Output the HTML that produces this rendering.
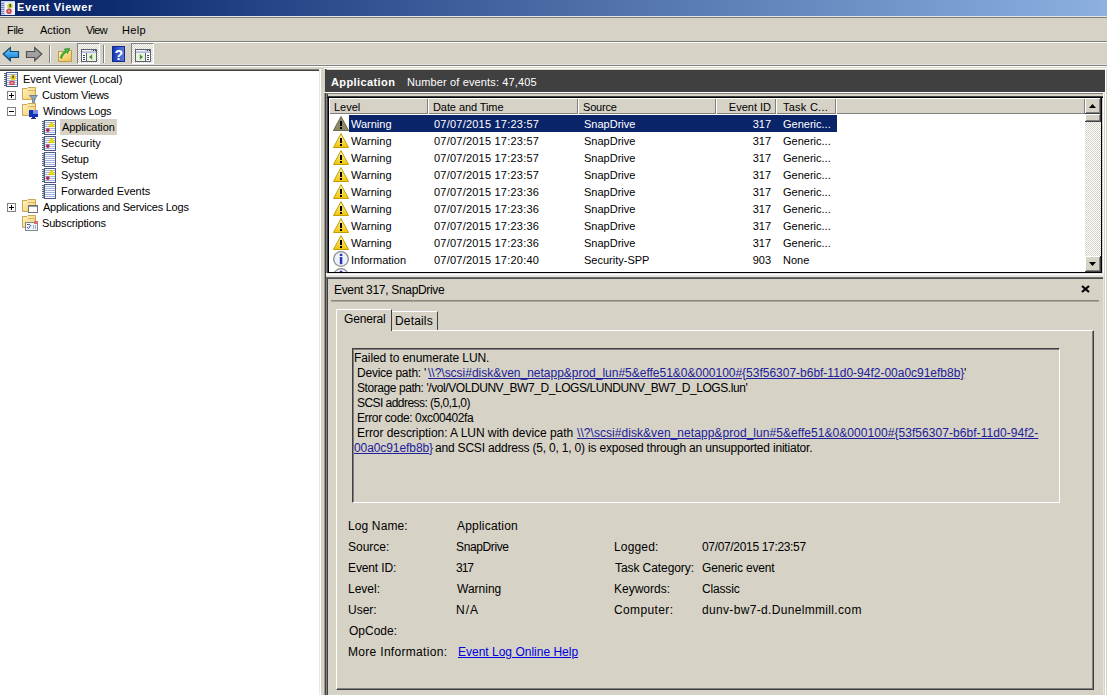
<!DOCTYPE html>
<html><head><meta charset="utf-8"><style>
*{margin:0;padding:0;box-sizing:border-box}
html,body{width:1107px;height:695px;overflow:hidden;background:#d6d2c6;font-family:"Liberation Sans",sans-serif;font-size:11px;color:#000;position:relative}
div,svg{position:absolute}
.t{white-space:nowrap;line-height:13px}
.s{font-size:12px;line-height:15px}
.lnk{color:#20209a;text-decoration:underline}
.dz{background-color:#fff;background-image:linear-gradient(45deg,#d6d2c6 25%,transparent 25%,transparent 75%,#d6d2c6 75%),linear-gradient(45deg,#d6d2c6 25%,transparent 25%,transparent 75%,#d6d2c6 75%);background-size:2px 2px;background-position:0 0,1px 1px}
</style></head><body>
<svg width="0" height="0" style="position:absolute"><defs>
<linearGradient id="gw" x1="0" y1="0" x2="0" y2="1"><stop offset="0" stop-color="#fff8b0"/><stop offset="1" stop-color="#f4c400"/></linearGradient>
<linearGradient id="gf" x1="0" y1="0" x2="1" y2="1"><stop offset="0" stop-color="#fff4c0"/><stop offset="1" stop-color="#f4cc68"/></linearGradient>
<symbol id="warn" viewBox="0 0 16 15"><path d="M8 0.6 L15.5 14.5 L0.5 14.5 Z" fill="url(#gw)" stroke="#c0a000" stroke-width="1" stroke-linejoin="round"/><rect x="7" y="5" width="2" height="5" fill="#000" shape-rendering="crispEdges"/><rect x="7" y="11" width="2" height="2" fill="#000" shape-rendering="crispEdges"/></symbol>
<symbol id="warns" viewBox="0 0 16 15"><path d="M8 0.5 L15.6 14.5 L0.4 14.5 Z" fill="#8a8a64" stroke="#6a6a50" stroke-width="1" stroke-linejoin="round"/><rect x="7" y="5" width="2" height="5" fill="#000" shape-rendering="crispEdges"/><rect x="7" y="11" width="2" height="2" fill="#000" shape-rendering="crispEdges"/></symbol>
<symbol id="info" viewBox="0 0 16 16"><circle cx="8" cy="8" r="7.3" fill="#f0f2f8" stroke="#8c8c8c" stroke-width="1.3"/><rect x="6.8" y="6" width="2.5" height="7.2" fill="#2434c0"/><rect x="6.8" y="2.8" width="2.5" height="2.2" fill="#2434c0"/></symbol>
<symbol id="folder" viewBox="0 0 14 13"><path d="M0.5 1.5 H5 L6 0.5 H13.5 V12.5 H0.5 Z" fill="url(#gf)" stroke="#c8a858" stroke-width="1"/><path d="M6 3.5 H13" stroke="#d8b868" stroke-width="1"/></symbol>
<symbol id="log" viewBox="0 0 14 15"><rect x="2.5" y="0.5" width="11" height="14" fill="#fff" stroke="#4c5888" stroke-width="1"/><path d="M3 2.5 H13 M3 4.5 H13 M3 6.5 H13 M3 8.5 H13 M3 10.5 H13 M3 12.5 H13" stroke="#a0b4dc" stroke-width="1"/><path d="M0 1.5 H2 M0 3.5 H2 M0 5.5 H2 M0 7.5 H2 M0 9.5 H2 M0 11.5 H2 M0 13.5 H2" stroke="#5c6474" stroke-width="1"/><path d="M1 2.5 H2 M1 4.5 H2 M1 6.5 H2 M1 8.5 H2 M1 10.5 H2 M1 12.5 H2" stroke="#b8bcc8" stroke-width="1"/></symbol>
<symbol id="logw" viewBox="0 0 14 15"><use href="#log"/><path d="M9.5 2 L12.3 6.6 L6.7 6.6 Z" fill="#f4e000" stroke="#e8c800" stroke-width="0.9" stroke-linejoin="round"/><circle cx="5.8" cy="10.1" r="1.9" fill="#b82848"/></symbol>
<symbol id="plus" viewBox="0 0 9 9"><rect x="0.5" y="0.5" width="8" height="8" fill="#fff" stroke="#808080"/><path d="M2 4.5 H7 M4.5 2 V7" stroke="#000"/></symbol>
<symbol id="minus" viewBox="0 0 9 9"><rect x="0.5" y="0.5" width="8" height="8" fill="#fff" stroke="#808080"/><path d="M2 4.5 H7" stroke="#000"/></symbol>
<symbol id="win" viewBox="0 0 16 13"><rect x="0.5" y="0.5" width="15" height="12" fill="#e8ecf8" stroke="#686c7c"/><rect x="1" y="1" width="14" height="2" fill="#b0b8d0"/><path d="M1 3.5 H15" stroke="#686c7c"/></symbol>
</defs></svg>
<div style="left:0px;top:0px;width:1107px;height:16px;background:linear-gradient(to right,#0a246a 0px,#0e2b70 110px,#224284 250px,#4a6aa6 550px,#6c90c4 850px,#8cafe0 1100px,#8eb1e2 1107px);"></div>
<svg style="left:1px;top:1px" width="14" height="14" viewBox="0 0 14 14"><rect x="0" y="0" width="14" height="14" fill="#c8cce8"/><rect x="4" y="1" width="10" height="13" fill="#e8ecfc"/><path d="M0 2.5 H3 M0 4.5 H3 M0 6.5 H3 M0 8.5 H3 M0 10.5 H3 M0 12.5 H3" stroke="#7c84b0"/><path d="M4 3.5 H14 M4 5.5 H14 M4 7.5 H14 M4 9.5 H14 M4 11.5 H14" stroke="#f8f8ff"/><circle cx="9" cy="5" r="2.8" fill="#d0d840"/><rect x="8.5" y="3" width="1.3" height="3.2" fill="#303000"/><circle cx="8" cy="10.3" r="2.8" fill="#c85058"/><circle cx="8" cy="10.3" r="1" fill="#f0a0a0"/></svg>
<div class="t" style="left:17px;top:1px;letter-spacing:0.636px;color:#fff;font-weight:bold">Event Viewer</div>
<div style="left:0px;top:16px;width:1107px;height:1px;background:#e8e6e0;"></div>
<div style="left:0px;top:17px;width:1107px;height:1px;background:#808080;"></div>
<div class="t" style="left:7px;top:24px;letter-spacing:-0.333px;">File</div>
<div class="t" style="left:40px;top:24px;letter-spacing:0.0px;">Action</div>
<div class="t" style="left:86px;top:24px;letter-spacing:-0.667px;">View</div>
<div class="t" style="left:122px;top:24px;letter-spacing:0.333px;">Help</div>
<div style="left:0px;top:41px;width:1107px;height:1px;background:#808080;"></div>
<div style="left:0px;top:42px;width:1107px;height:1px;background:#fff;"></div>
<svg style="left:2px;top:46px" width="18" height="16" viewBox="0 0 18 16"><defs><linearGradient id="gb" x1="0" y1="0" x2="0" y2="1"><stop offset="0" stop-color="#70d0ff"/><stop offset="1" stop-color="#1078d8"/></linearGradient></defs><path d="M1.2 8 L8.3 1.5 L8.3 5.5 L16.5 5.5 L16.5 11.5 L8.3 11.5 L8.3 14.7 Z" fill="url(#gb)" stroke="#184868" stroke-width="1.2" stroke-linejoin="miter"/></svg>
<svg style="left:25px;top:46px" width="18" height="16" viewBox="0 0 18 16"><path d="M16.8 8 L9.7 1.5 L9.7 5.5 L1.5 5.5 L1.5 11.5 L9.7 11.5 L9.7 14.7 Z" fill="#a0a0a0" stroke="#505050" stroke-width="1.2"/></svg>
<div style="left:49px;top:45px;width:1px;height:18px;background:#808080;"></div>
<div style="left:50px;top:45px;width:1px;height:18px;background:#fff;"></div>
<svg style="left:57px;top:47px" width="16" height="16" viewBox="0 0 16 16"><defs><linearGradient id="gfu" x1="0" y1="0" x2="0.6" y2="1"><stop offset="0" stop-color="#fff4b8"/><stop offset="1" stop-color="#f0c460"/></linearGradient></defs><path d="M1.5 4.5 H9 L10 3.5 H14.5 V14.5 H1.5 Z" fill="url(#gfu)" stroke="#c09848"/><path d="M3.5 11 C4 7 6 5 8.5 4 L7.5 2 L12.5 1.5 L10.5 6.5 L9.8 5 C7.5 6 5.5 8.5 4.5 11.5 Z" fill="#40c040" stroke="#208020" stroke-width="0.7"/></svg>
<div class="dz" style="left:77px;top:43px;width:23px;height:21px;border-left:1px solid #808080;border-top:1px solid #808080;border-right:1px solid #fff;border-bottom:1px solid #fff"></div>
<div class="dz" style="left:131px;top:43px;width:23px;height:21px;border-left:1px solid #808080;border-top:1px solid #808080;border-right:1px solid #fff;border-bottom:1px solid #fff"></div>
<svg style="left:81px;top:49px" width="16" height="13" viewBox="0 0 16 13"><g shape-rendering="crispEdges"><rect x="0" y="0" width="16" height="13" fill="#5c6070"/><rect x="1" y="1" width="14" height="2" fill="#c8ccd8"/><rect x="1" y="1" width="9" height="1" fill="#f4f4f8"/><rect x="12" y="1" width="1" height="1" fill="#404450"/><rect x="14" y="1" width="1" height="1" fill="#404450"/><rect x="1" y="3" width="14" height="1" fill="#b4bce8"/><rect x="1" y="4" width="4" height="8" fill="#fff"/><rect x="5" y="4" width="1" height="8" fill="#5c6070"/><rect x="6" y="4" width="9" height="8" fill="#e8f4dc"/><rect x="2" y="6" width="2" height="1" fill="#3c4468"/><rect x="2" y="8" width="2" height="1" fill="#3c4468"/><rect x="2" y="10" width="2" height="1" fill="#3c4468"/></g><path d="M8 8 L11.2 5.2 L11.2 10.8 Z" fill="#4c8c3c"/></svg>
<div style="left:103px;top:45px;width:1px;height:18px;background:#808080;"></div>
<div style="left:104px;top:45px;width:1px;height:18px;background:#fff;"></div>
<svg style="left:112px;top:46px" width="13" height="16" viewBox="0 0 13 16"><defs><linearGradient id="gh" x1="0" y1="0" x2="1" y2="0"><stop offset="0" stop-color="#1030a8"/><stop offset="0.3" stop-color="#2848c0"/><stop offset="1" stop-color="#6080e0"/></linearGradient></defs><rect x="0" y="0" width="13" height="16" fill="url(#gh)"/><rect x="0.5" y="0.5" width="12" height="15" fill="none" stroke="#102890"/><text x="6.8" y="13.5" font-family="Liberation Sans" font-weight="bold" font-size="14" fill="#fff" text-anchor="middle">?</text></svg>
<svg style="left:135px;top:49px" width="16" height="13" viewBox="0 0 16 13"><g shape-rendering="crispEdges"><rect x="0" y="0" width="16" height="13" fill="#5c6070"/><rect x="1" y="1" width="14" height="2" fill="#c8ccd8"/><rect x="1" y="1" width="9" height="1" fill="#f4f4f8"/><rect x="12" y="1" width="1" height="1" fill="#404450"/><rect x="14" y="1" width="1" height="1" fill="#404450"/><rect x="1" y="3" width="14" height="1" fill="#b4bce8"/><rect x="11" y="4" width="4" height="8" fill="#fff"/><rect x="10" y="4" width="1" height="8" fill="#5c6070"/><rect x="1" y="4" width="9" height="8" fill="#e8f4dc"/><rect x="12" y="6" width="2" height="1" fill="#3c4468"/><rect x="12" y="8" width="2" height="1" fill="#3c4468"/><rect x="12" y="10" width="2" height="1" fill="#3c4468"/></g><path d="M8 8 L4.8 5.2 L4.8 10.8 Z" fill="#4c8c3c"/></svg>
<div style="left:0px;top:64px;width:1107px;height:1px;background:#e4e2dc;"></div>
<div style="left:0px;top:65px;width:1107px;height:1px;background:#808080;"></div>
<div style="left:0px;top:66px;width:1107px;height:1px;background:#fff;"></div>
<div style="left:0px;top:69px;width:320px;height:1px;background:#808080;"></div>
<div style="left:0px;top:70px;width:320px;height:1px;background:#404040;"></div>
<div style="left:0px;top:71px;width:320px;height:624px;background:#fff;"></div>
<div style="left:319px;top:69px;width:1px;height:626px;background:#e8e8e8;"></div>
<div style="left:320px;top:69px;width:1px;height:626px;background:#fff;"></div>
<svg style="left:4px;top:72px" width="14" height="15" viewBox="0 0 14 15"><use href="#log"/></svg>
<svg style="left:4px;top:72px" width="14" height="15" viewBox="0 0 14 15"><circle cx="9" cy="5.5" r="2.8" fill="#e8d420"/><rect x="8.4" y="3.5" width="1.3" height="2.8" fill="#333"/><rect x="5.5" y="9" width="5" height="4" fill="#c83848"/><path d="M6.5 10 L9.5 12 M9.5 10 L6.5 12" stroke="#f8c0c0" stroke-width="0.8"/></svg>
<div class="t" style="left:23px;top:73px;letter-spacing:-0.105px;">Event Viewer (Local)</div>
<svg style="left:7px;top:91px" width="9" height="9" viewBox="0 0 9 9"><use href="#plus"/></svg>
<svg style="left:22px;top:87px" width="14" height="13" viewBox="0 0 14 13"><use href="#folder"/></svg>
<div class="t" style="left:42px;top:89px;letter-spacing:-0.273px;">Custom Views</div>
<svg style="left:7px;top:107px" width="9" height="9" viewBox="0 0 9 9"><use href="#minus"/></svg>
<svg style="left:22px;top:103px" width="14" height="13" viewBox="0 0 14 13"><use href="#folder"/></svg>
<div class="t" style="left:43px;top:105px;letter-spacing:-0.273px;">Windows Logs</div>
<svg style="left:42px;top:120px" width="14" height="15" viewBox="0 0 14 15"><use href="#logw"/></svg>
<div style="left:60px;top:119px;width:57px;height:16px;background:#d6d2c6;"></div>
<div class="t" style="left:62px;top:121px;letter-spacing:-0.1px;">Application</div>
<svg style="left:42px;top:136px" width="14" height="15" viewBox="0 0 14 15"><use href="#logw"/></svg>
<div class="t" style="left:61px;top:137px;letter-spacing:0.0px;">Security</div>
<svg style="left:42px;top:152px" width="14" height="15" viewBox="0 0 14 15"><use href="#log"/></svg>
<div class="t" style="left:61px;top:153px;letter-spacing:-0.25px;">Setup</div>
<svg style="left:42px;top:168px" width="14" height="15" viewBox="0 0 14 15"><use href="#logw"/></svg>
<div class="t" style="left:61px;top:169px;letter-spacing:0.0px;">System</div>
<svg style="left:42px;top:184px" width="14" height="15" viewBox="0 0 14 15"><use href="#log"/></svg>
<div class="t" style="left:61px;top:185px;letter-spacing:0.0px;">Forwarded Events</div>
<svg style="left:7px;top:203px" width="9" height="9" viewBox="0 0 9 9"><use href="#plus"/></svg>
<svg style="left:22px;top:199px" width="14" height="13" viewBox="0 0 14 13"><use href="#folder"/></svg>
<div class="t" style="left:43px;top:201px;letter-spacing:-0.241px;">Applications and Services Logs</div>
<svg style="left:22px;top:215px" width="14" height="13" viewBox="0 0 14 13"><use href="#folder"/></svg>
<div class="t" style="left:42px;top:217px;letter-spacing:-0.167px;">Subscriptions</div>
<svg style="left:29px;top:95px" width="9" height="8" viewBox="0 0 9 8"><path d="M0.5 0.5 H8.5 L5.5 4 V7.5 L3.5 7.5 V4 Z" fill="#88aac4" stroke="#5c7890" stroke-width="0.8"/></svg>
<svg style="left:29px;top:110px" width="9" height="9" viewBox="0 0 9 9"><rect x="0" y="0" width="9" height="7" fill="#1030c0"/><rect x="4" y="0" width="5" height="4" fill="#8090e0"/><rect x="3" y="7" width="3" height="1" fill="#203080"/><rect x="2" y="8" width="5" height="1" fill="#203080"/></svg>
<svg style="left:28px;top:205px" width="10" height="8" viewBox="0 0 10 8"><rect x="0.5" y="0.5" width="9" height="7" fill="#fff" stroke="#707070"/><path d="M1 1.5 H9" stroke="#9098a8"/></svg>
<svg style="left:25px;top:221px" width="13" height="10" viewBox="0 0 13 10"><rect x="0.5" y="1.5" width="12" height="8" fill="#f0f4fc" stroke="#808890"/><rect x="9" y="0" width="4" height="3" fill="#d87070"/><path d="M2 6 L3.5 7.5 L6 4" stroke="#3050a0" fill="none"/><path d="M8 5 H9 M10 5 H11 M8 7 H9 M10 7 H11 M2 3.5 H5" stroke="#606080"/></svg>
<div style="left:324px;top:93px;width:1px;height:602px;background:#a09c98;"></div>
<div style="left:325px;top:69px;width:1px;height:626px;background:#404040;"></div>
<div style="left:326px;top:69px;width:1px;height:626px;background:#808080;"></div>
<div style="left:327px;top:93px;width:1px;height:602px;background:#404040;"></div>
<div style="left:324px;top:68px;width:783px;height:1px;background:#fff;"></div>
<div style="left:325px;top:70px;width:780px;height:22px;background:#404040;"></div>
<div class="t" style="left:331px;top:76px;letter-spacing:0.4px;color:#fff;font-weight:bold">Application</div>
<div class="t" style="left:407px;top:76px;letter-spacing:0.13px;color:#fff">Number of events: 47,405</div>
<div style="left:325px;top:92px;width:780px;height:1px;background:#fff;"></div>
<div style="left:1105px;top:69px;width:1px;height:205px;background:#fff;"></div>
<div style="left:326px;top:93px;width:777px;height:1px;background:#808080;"></div>
<div style="left:327px;top:96px;width:776px;height:1px;background:#404040;"></div>
<div style="left:327px;top:97px;width:776px;height:1px;background:#000;"></div>
<div style="left:328px;top:97px;width:1px;height:176px;background:#000;"></div>
<div style="left:1101px;top:97px;width:1px;height:176px;background:#000;"></div>
<div style="left:1103px;top:92px;width:1px;height:182px;background:#fff;"></div>
<div style="left:328px;top:272px;width:774px;height:1px;background:#000;"></div>
<div style="left:329px;top:98px;width:772px;height:174px;background:#fff;"></div>
<div style="left:329px;top:98px;width:99px;height:16px;background:#d6d2c6;box-shadow:inset 1px 1px 0 #fff,inset -1px -1px 0 #808080"></div>
<div class="t" style="left:334px;top:101px;letter-spacing:0.0px;">Level</div>
<div style="left:428px;top:98px;width:150px;height:16px;background:#d6d2c6;box-shadow:inset 1px 1px 0 #fff,inset -1px -1px 0 #808080"></div>
<div class="t" style="left:433px;top:101px;letter-spacing:-0.083px;">Date and Time</div>
<div style="left:578px;top:98px;width:138px;height:16px;background:#d6d2c6;box-shadow:inset 1px 1px 0 #fff,inset -1px -1px 0 #808080"></div>
<div class="t" style="left:583px;top:101px;letter-spacing:-0.2px;">Source</div>
<div style="left:716px;top:98px;width:60px;height:16px;background:#d6d2c6;box-shadow:inset 1px 1px 0 #fff,inset -1px -1px 0 #808080"></div>
<div class="t" style="left:716px;top:101px;width:55px;text-align:right">Event ID</div>
<div style="left:776px;top:98px;width:60px;height:16px;background:#d6d2c6;box-shadow:inset 1px 1px 0 #fff,inset -1px -1px 0 #808080"></div>
<div class="t" style="left:783px;top:101px;letter-spacing:0.25px;">Task C...</div>
<div style="left:836px;top:98px;width:249px;height:16px;background:#d6d2c6;box-shadow:inset 1px 1px 0 #fff,inset -1px -1px 0 #808080"></div>
<div style="left:349px;top:115px;width:488px;height:17px;background:#0a246a;"></div>
<svg style="left:333px;top:116px" width="16" height="15" viewBox="0 0 16 15"><use href="#warns"/></svg>
<div class="t" style="left:351px;top:118px;color:#fff">Warning</div>
<div class="t" style="left:434px;top:118px;color:#fff;letter-spacing:0.22px">07/07/2015 17:23:57</div>
<div class="t" style="left:584px;top:118px;color:#fff">SnapDrive</div>
<div class="t" style="left:716px;top:118px;width:55px;text-align:right;color:#fff">317</div>
<div class="t" style="left:783px;top:118px;color:#fff">Generic...</div>
<svg style="left:333px;top:133px" width="16" height="15" viewBox="0 0 16 15"><use href="#warn"/></svg>
<div class="t" style="left:351px;top:135px;color:#000">Warning</div>
<div class="t" style="left:434px;top:135px;color:#000;letter-spacing:0.22px">07/07/2015 17:23:57</div>
<div class="t" style="left:584px;top:135px;color:#000">SnapDrive</div>
<div class="t" style="left:716px;top:135px;width:55px;text-align:right;color:#000">317</div>
<div class="t" style="left:783px;top:135px;color:#000">Generic...</div>
<svg style="left:333px;top:150px" width="16" height="15" viewBox="0 0 16 15"><use href="#warn"/></svg>
<div class="t" style="left:351px;top:152px;color:#000">Warning</div>
<div class="t" style="left:434px;top:152px;color:#000;letter-spacing:0.22px">07/07/2015 17:23:57</div>
<div class="t" style="left:584px;top:152px;color:#000">SnapDrive</div>
<div class="t" style="left:716px;top:152px;width:55px;text-align:right;color:#000">317</div>
<div class="t" style="left:783px;top:152px;color:#000">Generic...</div>
<svg style="left:333px;top:167px" width="16" height="15" viewBox="0 0 16 15"><use href="#warn"/></svg>
<div class="t" style="left:351px;top:169px;color:#000">Warning</div>
<div class="t" style="left:434px;top:169px;color:#000;letter-spacing:0.22px">07/07/2015 17:23:57</div>
<div class="t" style="left:584px;top:169px;color:#000">SnapDrive</div>
<div class="t" style="left:716px;top:169px;width:55px;text-align:right;color:#000">317</div>
<div class="t" style="left:783px;top:169px;color:#000">Generic...</div>
<svg style="left:333px;top:184px" width="16" height="15" viewBox="0 0 16 15"><use href="#warn"/></svg>
<div class="t" style="left:351px;top:186px;color:#000">Warning</div>
<div class="t" style="left:434px;top:186px;color:#000;letter-spacing:0.22px">07/07/2015 17:23:36</div>
<div class="t" style="left:584px;top:186px;color:#000">SnapDrive</div>
<div class="t" style="left:716px;top:186px;width:55px;text-align:right;color:#000">317</div>
<div class="t" style="left:783px;top:186px;color:#000">Generic...</div>
<svg style="left:333px;top:201px" width="16" height="15" viewBox="0 0 16 15"><use href="#warn"/></svg>
<div class="t" style="left:351px;top:203px;color:#000">Warning</div>
<div class="t" style="left:434px;top:203px;color:#000;letter-spacing:0.22px">07/07/2015 17:23:36</div>
<div class="t" style="left:584px;top:203px;color:#000">SnapDrive</div>
<div class="t" style="left:716px;top:203px;width:55px;text-align:right;color:#000">317</div>
<div class="t" style="left:783px;top:203px;color:#000">Generic...</div>
<svg style="left:333px;top:218px" width="16" height="15" viewBox="0 0 16 15"><use href="#warn"/></svg>
<div class="t" style="left:351px;top:220px;color:#000">Warning</div>
<div class="t" style="left:434px;top:220px;color:#000;letter-spacing:0.22px">07/07/2015 17:23:36</div>
<div class="t" style="left:584px;top:220px;color:#000">SnapDrive</div>
<div class="t" style="left:716px;top:220px;width:55px;text-align:right;color:#000">317</div>
<div class="t" style="left:783px;top:220px;color:#000">Generic...</div>
<svg style="left:333px;top:235px" width="16" height="15" viewBox="0 0 16 15"><use href="#warn"/></svg>
<div class="t" style="left:351px;top:237px;color:#000">Warning</div>
<div class="t" style="left:434px;top:237px;color:#000;letter-spacing:0.22px">07/07/2015 17:23:36</div>
<div class="t" style="left:584px;top:237px;color:#000">SnapDrive</div>
<div class="t" style="left:716px;top:237px;width:55px;text-align:right;color:#000">317</div>
<div class="t" style="left:783px;top:237px;color:#000">Generic...</div>
<svg style="left:333px;top:251px" width="16" height="16" viewBox="0 0 16 16"><use href="#info"/></svg>
<div class="t" style="left:351px;top:254px;color:#000">Information</div>
<div class="t" style="left:434px;top:254px;color:#000;letter-spacing:0.22px">07/07/2015 17:20:40</div>
<div class="t" style="left:584px;top:254px;color:#000">Security-SPP</div>
<div class="t" style="left:716px;top:254px;width:55px;text-align:right;color:#000">903</div>
<div class="t" style="left:783px;top:254px;color:#000">None</div>
<svg style="left:333px;top:268px" width="16" height="4" viewBox="0 0 16 4"><use href="#info" width="16" height="16"/></svg>
<div class="dz" style="left:1085px;top:98px;width:16px;height:174px"></div>
<div style="left:1085px;top:98px;width:16px;height:16px;background:#d6d2c6;box-shadow:inset -1px -1px 0 #404040,inset 1px 1px 0 #fff,inset -2px -2px 0 #808080"></div>
<svg style="left:1089px;top:104px" width="7" height="4" viewBox="0 0 7 4"><path d="M3.5 0 L7 4 L0 4 Z" fill="#000"/></svg>
<div style="left:1085px;top:114px;width:16px;height:8px;background:#d6d2c6;box-shadow:inset -1px -1px 0 #404040,inset 1px 1px 0 #fff,inset -2px -2px 0 #808080"></div>
<div style="left:1085px;top:256px;width:16px;height:16px;background:#d6d2c6;box-shadow:inset -1px -1px 0 #404040,inset 1px 1px 0 #fff,inset -2px -2px 0 #808080"></div>
<svg style="left:1089px;top:262px" width="7" height="4" viewBox="0 0 7 4"><path d="M0 0 L7 0 L3.5 4 Z" fill="#000"/></svg>
<div style="left:326px;top:273px;width:777px;height:4px;background:#e4e2dc;"></div>
<div style="left:326px;top:274px;width:777px;height:1px;background:#fff;"></div>
<div style="left:326px;top:277px;width:777px;height:1px;background:#707070;"></div>
<div style="left:326px;top:278px;width:777px;height:1px;background:#505050;"></div>
<div style="left:1103px;top:273px;width:1px;height:422px;background:#e8e6e0;"></div>
<div style="left:1105px;top:273px;width:1px;height:422px;background:#fff;"></div>
<div class="t s" style="left:334px;top:283px;letter-spacing:-0.316px;">Event 317, SnapDrive</div>
<div style="left:331px;top:300px;width:768px;height:1px;background:#8a8680;"></div>
<div style="left:331px;top:301px;width:768px;height:1px;background:#aaa69e;"></div>
<svg style="left:1081px;top:285px" width="9" height="8" viewBox="0 0 9 8"><path d="M1 1 L8 7 M8 1 L1 7" stroke="#000" stroke-width="2.2"/></svg>
<div style="left:336px;top:330px;width:758px;height:360px;background:#d6d2c6;border-left:1px solid #fff;border-top:1px solid #fff;border-bottom:1px solid #404040;border-right:1px solid #404040;box-shadow:inset -1px -1px 0 #808080"></div>
<div style="left:392px;top:311px;width:46px;height:19px;background:#d6d2c6;border-top:1px solid #fff;border-right:1px solid #404040"></div>
<div style="left:336px;top:309px;width:56px;height:22px;background:#d6d2c6;border-left:1px solid #fff;border-top:1px solid #fff;border-right:1px solid #404040"></div>
<div class="t s" style="left:344px;top:312px;letter-spacing:-0.167px;">General</div>
<div class="t s" style="left:395px;top:314px;letter-spacing:0.167px;">Details</div>
<div style="left:352px;top:348px;width:708px;height:155px;background:#d6d2c6;border-left:1px solid #404040;border-top:1px solid #404040;border-right:1px solid #fff;border-bottom:1px solid #fff;box-shadow:inset 1px 1px 0 #808080"></div>
<div class="t s" style="left:354px;top:351px;letter-spacing:-0.087px;">Failed to enumerate LUN.</div>
<div class="t s" style="left:357px;top:366px;letter-spacing:-0.231px;">Device path: '</div>
<div class="t s" style="left:428px;top:366px;letter-spacing:-0.011px;"><span class="lnk">\\?\scsi#disk&amp;ven_netapp&amp;prod_lun#5&amp;effe51&amp;0&amp;000100#{53f56307-b6bf-11d0-94f2-00a0c91efb8b}</span></div>
<div class="t s" style="left:964px;top:366px;">'</div>
<div class="t s" style="left:357px;top:381px;letter-spacing:-0.426px;">Storage path: '/vol/VOLDUNV_BW7_D_LOGS/LUNDUNV_BW7_D_LOGS.lun'</div>
<div class="t s" style="left:357px;top:396px;letter-spacing:-0.545px;">SCSI address: (5,0,1,0)</div>
<div class="t s" style="left:357px;top:411px;letter-spacing:-0.381px;">Error code: 0xc00402fa</div>
<div class="t s" style="left:357px;top:426px;letter-spacing:-0.05px;">Error description: A LUN with device path</div>
<div class="t s" style="left:577px;top:426px;letter-spacing:0.053px;"><span class="lnk">\\?\scsi#disk&amp;ven_netapp&amp;prod_lun#5&amp;effe51&amp;0&amp;000100#{53f56307-b6bf-11d0-94f2-</span></div>
<div class="t s" style="left:354px;top:441px;letter-spacing:-0.083px;"><span class="lnk">00a0c91efb8b}</span></div>
<div class="t s" style="left:435px;top:441px;letter-spacing:-0.192px;">and SCSI address (5, 0, 1, 0) is exposed through an unsupported initiator.</div>
<div class="t s" style="left:348px;top:519px;letter-spacing:0.125px;">Log Name:</div>
<div class="t s" style="left:457px;top:519px;letter-spacing:0.2px;">Application</div>
<div class="t s" style="left:348px;top:540px;letter-spacing:0.0px;">Source:</div>
<div class="t s" style="left:456px;top:540px;letter-spacing:-0.375px;">SnapDrive</div>
<div class="t s" style="left:348px;top:561px;letter-spacing:-0.125px;">Event ID:</div>
<div class="t s" style="left:456px;top:561px;letter-spacing:-1.0px;">317</div>
<div class="t s" style="left:348px;top:582px;letter-spacing:0.0px;">Level:</div>
<div class="t s" style="left:457px;top:582px;letter-spacing:0.0px;">Warning</div>
<div class="t s" style="left:348px;top:603px;letter-spacing:0.0px;">User:</div>
<div class="t s" style="left:456px;top:603px;letter-spacing:1.0px;">N/A</div>
<div class="t s" style="left:349px;top:624px;letter-spacing:0.0px;">OpCode:</div>
<div class="t s" style="left:348px;top:645px;letter-spacing:0.312px;">More Information:</div>
<div class="t s" style="left:458px;top:645px;letter-spacing:0.0px;"><span class="lnk" style="color:#0000dd">Event Log Online Help</span></div>
<div class="t s" style="left:614px;top:540px;letter-spacing:0.167px;">Logged:</div>
<div class="t s" style="left:702px;top:540px;letter-spacing:-0.333px;">07/07/2015 17:23:57</div>
<div class="t s" style="left:615px;top:561px;letter-spacing:-0.077px;">Task Category:</div>
<div class="t s" style="left:702px;top:561px;letter-spacing:-0.167px;">Generic event</div>
<div class="t s" style="left:614px;top:582px;letter-spacing:0.0px;">Keywords:</div>
<div class="t s" style="left:702px;top:582px;letter-spacing:-0.167px;">Classic</div>
<div class="t s" style="left:614px;top:603px;letter-spacing:0.375px;">Computer:</div>
<div class="t s" style="left:702px;top:603px;letter-spacing:0.333px;">dunv-bw7-d.Dunelmmill.com</div>
</body></html>
